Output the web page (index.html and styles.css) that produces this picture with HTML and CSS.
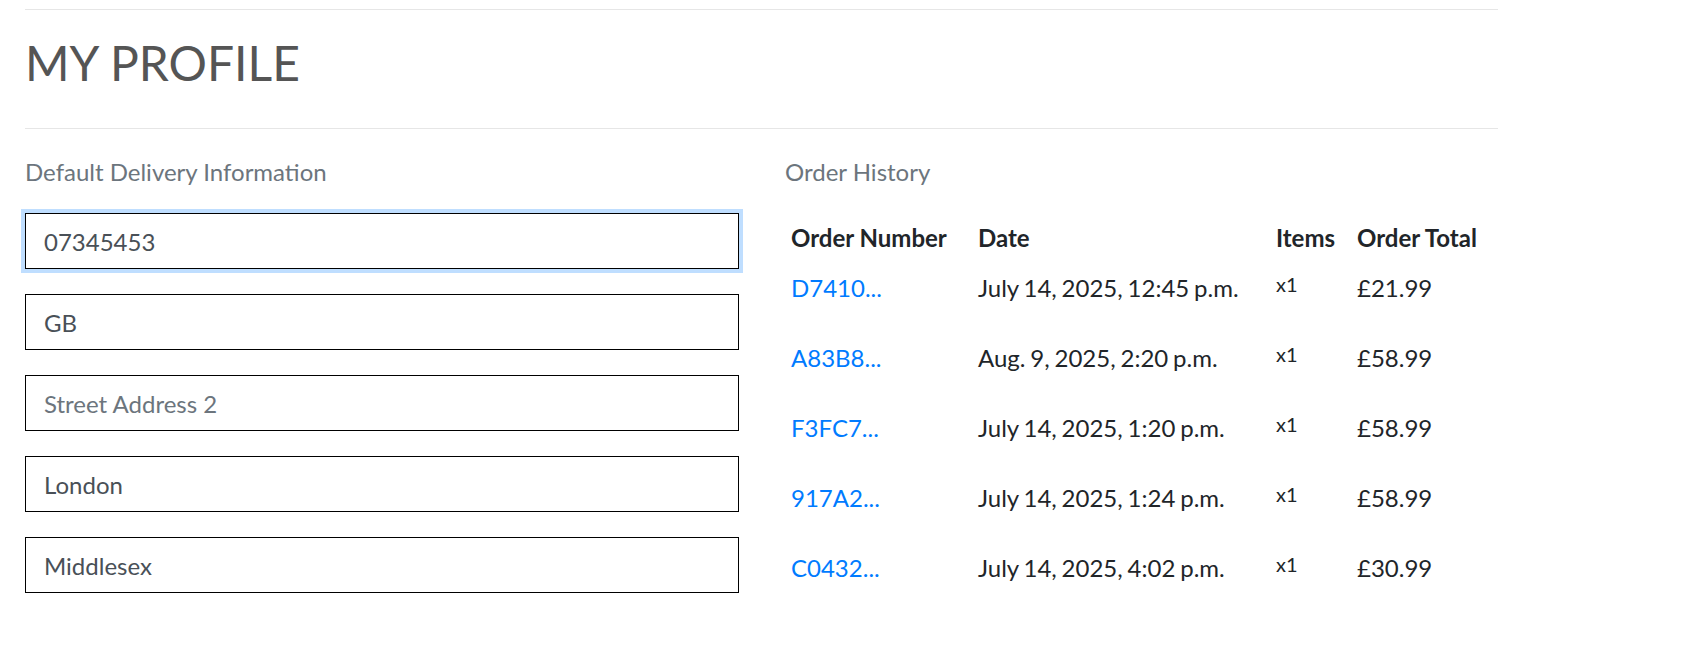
FILE: index.html
```html
<!DOCTYPE html>
<html lang="en">
<head>
<meta charset="utf-8">
<title>My Profile</title>
<link rel="stylesheet" href="styles.css">
</head>
<body>
<main class="page">
  <header class="page-header">
    <h1 class="page-title">MY PROFILE</h1>
  </header>
  <div class="profile-grid">
    <section class="delivery">
      <p class="section-label">Default Delivery Information</p>
      <form class="delivery-form">
        <input class="field is-focused" type="text" value="07345453">
        <input class="field" type="text" value="GB">
        <input class="field" type="text" placeholder="Street Address 2">
        <input class="field" type="text" value="London">
        <input class="field" type="text" value="Middlesex">
      </form>
    </section>
    <section class="orders">
      <p class="section-label">Order History</p>
      <table class="order-table">
        <colgroup>
          <col class="c-num"><col class="c-date"><col class="c-items"><col class="c-total">
        </colgroup>
        <thead>
          <tr><th>Order Number</th><th>Date</th><th>Items</th><th>Order Total</th></tr>
        </thead>
        <tbody>
          <tr><td><a href="#">D7410...</a></td><td class="date">July 14, 2025, 12:45 p.m.</td><td><span class="qty">x1</span></td><td>£21.99</td></tr>
          <tr><td><a href="#">A83B8...</a></td><td class="date">Aug. 9, 2025, 2:20 p.m.</td><td><span class="qty">x1</span></td><td>£58.99</td></tr>
          <tr><td><a href="#">F3FC7...</a></td><td class="date">July 14, 2025, 1:20 p.m.</td><td><span class="qty">x1</span></td><td>£58.99</td></tr>
          <tr><td><a href="#">917A2...</a></td><td class="date">July 14, 2025, 1:24 p.m.</td><td><span class="qty">x1</span></td><td>£58.99</td></tr>
          <tr><td><a href="#">C0432...</a></td><td class="date">July 14, 2025, 4:02 p.m.</td><td><span class="qty">x1</span></td><td>£30.99</td></tr>
        </tbody>
      </table>
    </section>
  </div>
</main>
</body>
</html>
```

FILE: styles.css
```css
* { box-sizing: border-box; }

html, body {
  margin: 0;
  padding: 0;
  background: #ffffff;
}

body {
  font-family: Lato, "Open Sans", "Liberation Sans", sans-serif;
  color: #212529;
  font-size: 24px;
  line-height: 1.2;
}

.page {
  width: 1473px;
  margin-left: 25px;
  padding-top: 9px;
}

.page-header {
  border-top: 1px solid #e6e6e6;
  border-bottom: 1px solid #e6e6e6;
  padding: 24px 0 36px;
}

.page-title {
  margin: 0;
  font-size: 48px;
  font-weight: 400;
  line-height: 58px;
  color: #555555;
}

.profile-grid {
  display: grid;
  grid-template-columns: 714px 713px;
  column-gap: 46px;
  padding-top: 28px;
}

.section-label {
  margin: 0;
  font-size: 24px;
  line-height: 29px;
  color: #6c757d;
}

.delivery-form {
  display: flex;
  flex-direction: column;
  gap: 25px;
  margin-top: 27px;
}

.field {
  display: block;
  width: 100%;
  height: 56px;
  margin: 0;
  padding: 0 18px;
  border: 1px solid #000000;
  border-radius: 0;
  background: #ffffff;
  font-family: inherit;
  font-size: 24px;
  color: #495057;
  outline: none;
}

.field::placeholder {
  color: #6c757d;
  opacity: 1;
}

.field.is-focused {
  box-shadow: 0 0 0 4px rgba(0, 123, 255, 0.25);
}

.order-table {
  width: 100%;
  margin-top: 26px;
  border-collapse: collapse;
}

.c-num { width: 187px; }
.c-date { width: 298px; }
.c-items { width: 81px; }
.c-total { width: 147px; }

.order-table th {
  text-align: left;
  font-weight: 700;
  color: #212529;
  padding: 11px 6px 1px;
  line-height: 29px;
  white-space: nowrap;
}

.order-table td {
  text-align: left;
  padding: 20px 6px 21px;
  line-height: 29px;
  color: #212529;
  white-space: nowrap;
}

.order-table .date {
  word-spacing: -1.3px;
}

.order-table a {
  color: #007bff;
  text-decoration: none;
}

.qty {
  font-size: 20px;
  line-height: 1;
  vertical-align: 5px;
}
```
